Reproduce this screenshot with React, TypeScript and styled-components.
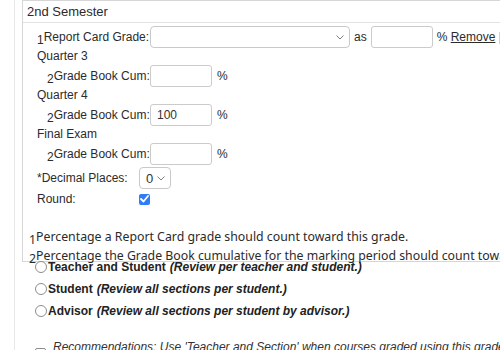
import React from 'react';
import styled, { createGlobalStyle } from 'styled-components';

const Global = createGlobalStyle`
  html, body { margin: 0; padding: 0; overflow: hidden; background: #fff; }
  body { font-family: "Liberation Sans", Arial, sans-serif; color: #2b2b2b; font-size: 12px; }
`;

const Page = styled.div`
  width: 640px;
  min-height: 420px;
  margin-left: 14px;
  border-left: 1px solid #e8e8e8;
  padding-left: 7px;
`;

const Section = styled.section`
  box-sizing: border-box;
  height: 262px;
  border: 1px solid #d6d6d6;
  border-right: none;
`;

const Heading = styled.div`
  height: 21px;
  line-height: 21px;
  padding-left: 4px;
  font-size: 13px;
  color: #2b2b2b;
  border-bottom: 1px solid #e2e2e2;
`;

const Form = styled.div`
  padding-left: 14px;
  display: flex;
  flex-direction: column;
`;

const Row = styled.div<{ $indent?: number; $top?: number; $h?: number }>`
  display: flex;
  align-items: center;
  height: ${p => p.$h ?? 22}px;
  margin-top: ${p => p.$top ?? 0}px;
  padding-left: ${p => p.$indent ?? 0}px;
  white-space: nowrap;
`;

const Label = styled.span<{ $w: number }>`
  width: ${p => p.$w}px;
  flex: none;
  font-size: 12px;
`;

const Sub = styled.span`
  vertical-align: sub;
  line-height: 0;
`;

const Period = styled.div`
  height: 17px;
  line-height: 17px;
  font-size: 12px;
`;

const SelectBox = styled.div<{ $w: number }>`
  box-sizing: border-box;
  width: ${p => p.$w}px;
  height: 22px;
  border: 1px solid #c9c9c9;
  border-radius: 4px;
  background: #fff;
  display: flex;
  align-items: center;
  justify-content: space-between;
  padding: 0 5px 0 6px;
  font-size: 13px;
  color: #333;
  flex: none;
`;

const TextBox = styled.div<{ $w: number }>`
  box-sizing: border-box;
  width: ${p => p.$w}px;
  height: 22px;
  border: 1px solid #cbcbcb;
  border-radius: 3px;
  background: #fff;
  padding-left: 6px;
  line-height: 20px;
  font-size: 12px;
  color: #333;
  flex: none;
`;

const Inline = styled.span<{ $ml?: number }>`
  margin-left: ${p => p.$ml ?? 0}px;
  font-size: 12px;
`;

const Link = styled.span`
  text-decoration: underline;
  color: #2b2b2b;
`;

const Check = styled.span`
  width: 11px;
  height: 11px;
  border-radius: 2px;
  background: #2f7cf6;
  display: inline-flex;
  align-items: center;
  justify-content: center;
`;

const Notes = styled.div`
  margin-top: 18px;
  padding-left: 6px;
  font-family: "Noto Sans", "DejaVu Sans", sans-serif;
  font-size: 12.3px;
  line-height: 19px;
  color: #2b2b2b;
  white-space: nowrap;
`;

const Radios = styled.div`
  margin-top: -6px;
  padding-left: 13px;
  display: flex;
  flex-direction: column;
`;

const RadioRow = styled.div`
  display: flex;
  align-items: center;
  height: 22px;
  white-space: nowrap;
  font-size: 12px;
  color: #222;
`;

const RadioDot = styled.span`
  box-sizing: border-box;
  width: 12px;
  height: 12px;
  border: 1px solid #8d8d8d;
  border-radius: 50%;
  margin-right: 1px;
  flex: none;
  background: #fff;
`;

const Strong = styled.b`
  font-weight: bold;
`;

const Note = styled.i`
  font-weight: bold;
  font-style: italic;
  margin-left: 4px;
`;

const RecRow = styled.div`
  display: flex;
  align-items: flex-start;
  margin-top: 17px;
  padding-left: 13px;
  white-space: nowrap;
`;

const RecBox = styled.span`
  box-sizing: border-box;
  width: 11px;
  height: 12px;
  margin-top: 9px;
  border: 1px solid #8d8d8d;
  border-radius: 2px;
  flex: none;
`;

const RecText = styled.i`
  margin-left: 7px;
  font-size: 12px;
  line-height: 16px;
  color: #333;
`;

const Chevron = () => (
  <svg width="8" height="5" viewBox="0 0 8 5">
    <polyline points="0.5,0.5 4,4 7.5,0.5" fill="none" stroke="#808080" strokeWidth="1" />
  </svg>
);

const Tick = () => (
  <svg width="9" height="8" viewBox="0 0 9 8">
    <polyline points="1,4 3.5,6.5 8,1" fill="none" stroke="#fff" strokeWidth="1.8" strokeLinecap="round" strokeLinejoin="round" />
  </svg>
);

const periods = [
  { name: 'Quarter 3', value: '' },
  { name: 'Quarter 4', value: '100' },
  { name: 'Final Exam', value: '' },
];

export default function App() {
  return (
    <>
      <Global />
      <Page>
        <Section>
          <Heading>2nd Semester</Heading>
          <Form>
            <Row $top={3}>
              <Label $w={113}><Sub>1</Sub>Report Card Grade:</Label>
              <SelectBox $w={200}><span /><Chevron /></SelectBox>
              <Inline $ml={4}>as</Inline>
              <Inline $ml={4} as="span"><TextBox $w={62} /></Inline>
              <Inline $ml={4}>% <Link>Remove</Link> |</Inline>
            </Row>
            {periods.map(p => (
              <React.Fragment key={p.name}>
                <Period>{p.name}</Period>
                <Row $indent={10}>
                  <Label $w={103}><Sub>2</Sub>Grade Book Cum:</Label>
                  <TextBox $w={62}>{p.value}</TextBox>
                  <Inline $ml={5}>%</Inline>
                </Row>
              </React.Fragment>
            ))}
            <Row $top={2}>
              <Label $w={102}>*Decimal Places:</Label>
              <SelectBox $w={32}>0<Chevron /></SelectBox>
            </Row>
            <Row $h={20}>
              <Label $w={102}>Round:</Label>
              <Check><Tick /></Check>
            </Row>
          </Form>
          <Notes>
            <div><Sub>1</Sub>Percentage a Report Card grade should count toward this grade.</div>
            <div><Sub>2</Sub>Percentage the Grade Book cumulative for the marking period should count toward this grade.</div>
          </Notes>
        </Section>
        <Radios>
          <RadioRow><RadioDot /><Strong>Teacher and Student</Strong><Note>(Review per teacher and student.)</Note></RadioRow>
          <RadioRow><RadioDot /><Strong>Student</Strong><Note>(Review all sections per student.)</Note></RadioRow>
          <RadioRow><RadioDot /><Strong>Advisor</Strong><Note>(Review all sections per student by advisor.)</Note></RadioRow>
        </Radios>
        <RecRow>
          <RecBox />
          <RecText>Recommendations: Use 'Teacher and Section' when courses graded using this grade scale are taught by multiple teachers.</RecText>
        </RecRow>
      </Page>
    </>
  );
}
